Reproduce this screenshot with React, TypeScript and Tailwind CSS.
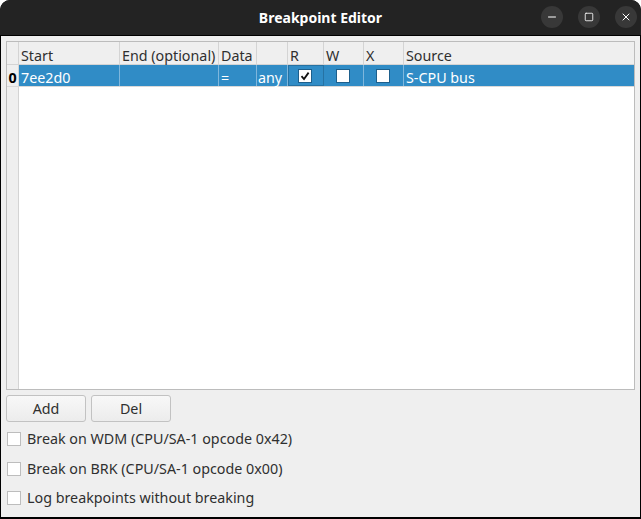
import React from 'react';
import { Minus, Square, X } from 'lucide-react';

const font = { fontFamily: '"Noto Sans", "Liberation Sans", sans-serif' };

const columns = [
  { name: 'Start', w: 'w-[101px]' },
  { name: 'End (optional)', w: 'w-[99px]' },
  { name: 'Data', w: 'w-[38px]' },
  { name: '', w: 'w-[31px]' },
  { name: 'R', w: 'w-[36px]' },
  { name: 'W', w: 'w-[40px]' },
  { name: 'X', w: 'w-[40px]' },
  { name: 'Source', w: 'flex-1' },
];

const CheckBox: React.FC<{ checked?: boolean; dark?: boolean }> = ({ checked, dark }) => (
  <div
    className={`w-[14px] h-[14px] bg-white flex items-center justify-center ${
      dark ? 'border border-[#1d5f8c]' : 'border border-[#bdbdbd]'
    }`}
  >
    {checked && (
      <svg width="10" height="10" viewBox="0 0 10 10">
        <path d="M1.5 5.2 L4 8 L8.6 1.6" fill="none" stroke="#111" strokeWidth="1.8" />
      </svg>
    )}
  </div>
);

const App: React.FC = () => {
  return (
    <div
      className="w-[641px] h-[519px] bg-black overflow-hidden rounded-t-[10px] flex flex-col text-[14.3px] text-[#2f2f2f]"
      style={font}
    >
      {/* title bar */}
      <div className="h-[35px] bg-[#232323] flex items-center relative shrink-0">
        <div className="flex-1 text-center text-white font-bold text-[14px]">Breakpoint Editor</div>
        <div className="absolute right-[4px] top-[6px] flex gap-[15px]">
          {[Minus, Square, X].map((Icon, i) => (
            <div key={i} className="w-[22px] h-[22px] rounded-full bg-[#383838] flex items-center justify-center">
              <Icon className="text-white" size={i === 1 ? 10 : 12} strokeWidth={2} />
            </div>
          ))}
        </div>
      </div>

      {/* body */}
      <div className="mt-[1px] mx-[1px] h-[481px] bg-[#efefef] px-[5px] pt-[5px] flex flex-col">
        <div className="h-[349px] border border-[#bcbcbc] bg-white flex flex-col">
          {/* header */}
          <div className="h-[23px] flex bg-[#efefef] border-b border-[#d4d4d4]">
            <div className="w-[12px] border-r border-[#d4d4d4]" />
            {columns.map((c, i) => (
              <div
                key={i}
                className={`${c.w} ${i < columns.length - 1 ? 'border-r border-[#d4d4d4]' : ''} pl-[2px] pt-[7px] flex items-center leading-none`}
              >
                {c.name}
              </div>
            ))}
          </div>
          {/* row */}
          <div className="h-[22px] flex border-b border-[#d9d9d9]">
            <div className="w-[12px] bg-[#efefef] border-r border-[#d4d4d4] pt-[4px] flex items-center justify-center font-bold text-black">
              0
            </div>
            <div className="flex-1 flex bg-[#308cc6] text-white">
              <div className="w-[101px] border-r border-[#7fb6dc] pl-[2px] pt-[4px] flex items-center">7ee2d0</div>
              <div className="w-[99px] border-r border-[#7fb6dc]" />
              <div className="w-[38px] border-r border-[#7fb6dc] pl-[2px] pt-[4px] flex items-center">=</div>
              <div className="w-[31px] border-r border-[#7fb6dc] pl-[1px] pt-[4px] flex items-center">any</div>
              <div className="w-[36px] border border-[#2672a3] flex items-center justify-center pr-[3px]">
                <CheckBox checked dark />
              </div>
              <div className="w-[40px] border-r border-[#7fb6dc] flex items-center justify-center pr-[2px]">
                <CheckBox dark />
              </div>
              <div className="w-[40px] border-r border-[#7fb6dc] flex items-center justify-center pr-[2px]">
                <CheckBox dark />
              </div>
              <div className="flex-1 pl-[2px] pt-[4px] flex items-center">S-CPU bus</div>
            </div>
          </div>
          <div className="flex-1 flex">
            <div className="w-[12px] bg-[#efefef] border-r border-[#d4d4d4]" />
            <div className="flex-1" />
          </div>
        </div>

        {/* buttons */}
        <div className="flex gap-[5px] mt-[5px]">
          {['Add', 'Del'].map((b) => (
            <button
              key={b}
              className="w-[80px] h-[27px] rounded-[3px] border border-[#c2c2c2] bg-gradient-to-b from-[#f8f8f8] to-[#ececec] text-[#2f2f2f] text-[14.3px]"
            >
              {b}
            </button>
          ))}
        </div>

        {/* options */}
        <div className="flex flex-col gap-[15.5px] mt-[10px]">
          {[
            'Break on WDM (CPU/SA-1 opcode 0x42)',
            'Break on BRK (CPU/SA-1 opcode 0x00)',
            'Log breakpoints without breaking',
          ].map((t) => (
            <label key={t} className="flex items-center gap-[6px] h-[14px] pl-[1px]">
              <CheckBox />
              <span>{t}</span>
            </label>
          ))}
        </div>
      </div>
    </div>
  );
};

export default App;
